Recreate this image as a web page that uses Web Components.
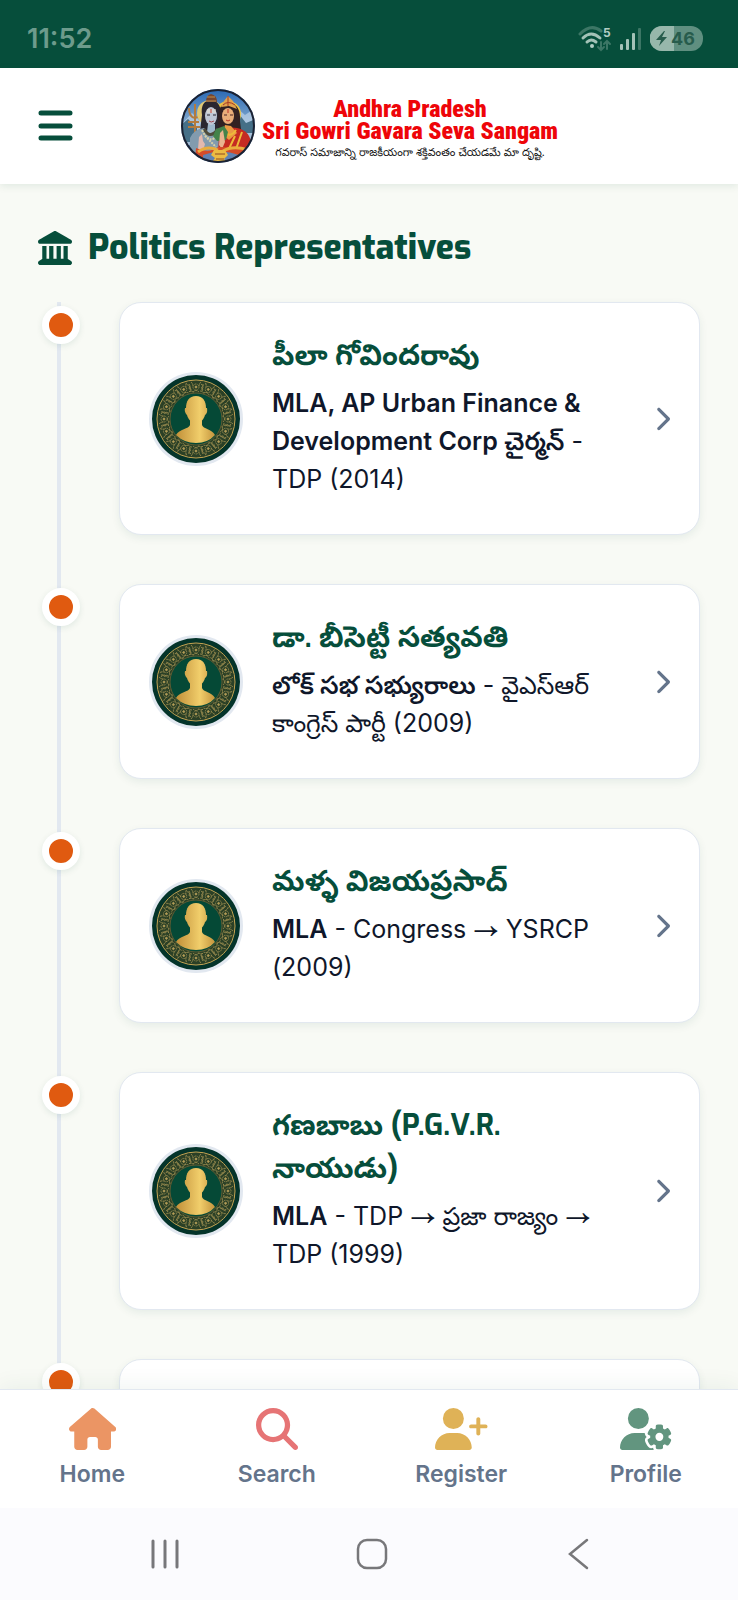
<!DOCTYPE html>
<html lang="te">
<head>
<meta charset="utf-8">
<meta name="viewport" content="width=device-width, initial-scale=1">
<title>Politics Representatives</title>
<style>
    :root {
        --green: #064e3b;
        --ink: #0f172a;
        --muted: #64748b;
        --line: #e2e8f0;
        --page: #f8faf5;
        --body_font: Inter, "Noto Sans Telugu", "Noto Sans", sans-serif;
        --title_font: Exo, "Noto Sans Telugu", "Noto Sans", sans-serif;
    }

    body {
        margin: 0px;
        background: var(--page);
        color: var(--ink);
        font-family: var(--body_font);
    }

    .arrow {
        font-family: "Noto Sans Math", "DejaVu Sans", sans-serif;
        line-height: 1;
    }
</style>
</head>
<body>

<app-shell>
    <status-bar slot="top"></status-bar>
    <app-header slot="top"></app-header>

    <section-title>Politics Representatives</section-title>
    <time-line>
        <rep-card>
            <span slot="name">పీలా గోవిందరావు</span>
            <b>MLA, AP Urban Finance &amp; Development Corp చైర్మన్</b> - TDP (2014)
        </rep-card>
        <rep-card>
            <span slot="name">డా. బీసెట్టీ సత్యవతి</span>
            <b>లోక్ సభ సభ్యురాలు</b> - వైఎస్ఆర్ కాంగ్రెస్ పార్టీ (2009)
        </rep-card>
        <rep-card>
            <span slot="name">మళ్ళ విజయప్రసాద్</span>
            <b>MLA</b> - Congress <span class="arrow">→</span> YSRCP (2009)
        </rep-card>
        <rep-card>
            <span slot="name">గణబాబు (P.G.V.R. నాయుడు)</span>
            <b>MLA</b> - TDP <span class="arrow">→</span> ప్రజా రాజ్యం <span class="arrow">→</span> TDP (1999)
        </rep-card>
        <rep-card></rep-card>
    </time-line>

    <tab-bar slot="bottom">
        <tab-item data-icon="home">Home</tab-item>
        <tab-item data-icon="search">Search</tab-item>
        <tab-item data-icon="register">Register</tab-item>
        <tab-item data-icon="profile">Profile</tab-item>
    </tab-bar>
    <system-bar slot="bottom"></system-bar>
</app-shell>

<script>
// Small base class: clones its own template into an open shadow root
const define = (name, html, setup) => {
    const template = document.createElement("template");
    template.innerHTML = html;
    customElements.define(name, class extends HTMLElement {
        constructor() {
            super();
            this.attachShadow({ mode: "open" });
            this.shadowRoot.append(template.content.cloneNode(true));
            setup?.(this, this.shadowRoot);
        }
    });
};


// Page frame: fixed bars around a scrolling middle
define("app-shell", /*html*/ `
<style>
    :host {
        display: flex;
        flex-direction: column;
        height: 100vh;
    }

    main {
        flex: 1;
        min-height: 0px;
        overflow-y: auto;
        scrollbar-width: none;
        padding: 40px 38px 0px;
    }

    header {
        position: relative;
        z-index: 1;
    }

    footer {
        position: relative;
        box-shadow: 0px -4px 20px rgba(6, 78, 59, 0.06);
    }
</style>
<header><slot name="top"></slot></header>
<main><slot></slot></main>
<footer><slot name="bottom"></slot></footer>
`);


define("status-bar", /*html*/ `
<style>
    :host {
        display: flex;
        justify-content: space-between;
        align-items: center;
        box-sizing: border-box;
        height: 68px;
        padding: 9px 35px 0px 27px;
        background: var(--green);
        color: #6d9b8c;
        font: 600 27px Inter, sans-serif;
    }

    div {
        display: flex;
        align-items: center;
        gap: 8px;
    }

    svg {
        display: block;
    }

    text {
        font-family: Inter, sans-serif;
    }
</style>
<time>11:52</time>
<div>
    <svg width="34" height="26" viewBox="0 0 34 26" fill="none" stroke-linecap="round" role="img" aria-label="Wi-Fi">
        <path d="M2 8Q13-3 23 5" stroke="#3c7665" stroke-width="3"></path>
        <path d="M5 12Q13 4 22 12" stroke="#a3c2b7" stroke-width="3"></path>
        <path d="M9 16Q13 12 18 16" stroke="#a3c2b7" stroke-width="3"></path>
        <circle cx="14" cy="20" r="2" fill="#b3cdc4"></circle>
        <path d="M23 16v8m-3-3l3 3 3-3M29 23v-8m-3 3l3-3 3 3" stroke="#3c7665" stroke-width="2"></path>
        <text x="25" y="11" font-size="12" font-weight="700" fill="#b3cdc4">5</text>
    </svg>
    <svg width="22" height="24" viewBox="0 0 22 24" role="img" aria-label="Signal">
        <rect x="0" y="17" width="3" height="6" rx="1" fill="#a3c2b7"></rect>
        <rect x="6" y="12" width="3" height="11" rx="1" fill="#a3c2b7"></rect>
        <rect x="12" y="6" width="3" height="17" rx="1" fill="#a3c2b7"></rect>
        <rect x="18" y="1" width="3" height="22" rx="1" fill="#3c7665"></rect>
    </svg>
    <svg width="53" height="25" viewBox="0 0 53 25" role="img" aria-label="Battery">
        <rect width="53" height="25" rx="12" fill="#5f8f80"></rect>
        <path d="M24 0H12a12 12 0 0 0 0 25H24z" fill="#97b7ab"></path>
        <path d="M14 5L6 14h5l-2 6 8-9h-5l3-6z" fill="#275c4c"></path>
        <text x="21" y="19" font-size="18" font-weight="700" fill="#275c4c">46</text>
    </svg>
</div>
`);


define("app-header", /*html*/ `
<style>
    :host {
        display: grid;
        grid-template-columns: 1fr auto 1fr;
        align-items: center;
        box-sizing: border-box;
        height: 116px;
        padding: 0px 38px;
        background: #fff;
        box-shadow: 0px 2px 8px rgba(6, 78, 59, 0.1);
    }

    button {
        justify-self: start;
        border: 0px;
        padding: 0px;
        background: none;
        color: var(--green);
        cursor: pointer;
    }

    svg {
        display: block;
    }

    a {
        display: flex;
        align-items: center;
        gap: 6px;
        color: #ee0509;
        text-align: center;
        text-decoration: none;
    }

    span {
        padding-top: 10px;
    }

    strong {
        display: block;
        font: 900 24px/22px "Roboto Condensed", Roboto, sans-serif;
        white-space: nowrap;
    }

    small {
        display: block;
        margin-top: 2px;
        color: #111;
        font: 400 11px/20px "Noto Sans Telugu", "Noto Sans", sans-serif;
        white-space: nowrap;
    }
</style>
<button type="button" aria-label="Menu">
    <svg width="35" height="32" viewBox="0 0 35 32" fill="none" stroke="currentColor" stroke-width="5" stroke-linecap="round">
        <path d="M3 3h29M3 16h29M3 28h29"></path>
    </svg>
</button>
<a href="#home">
    <svg width="76" height="76" viewBox="0 0 76 76" aria-hidden="true">
        <defs>
            <clipPath id="round"><circle cx="38" cy="38" r="36"></circle></clipPath>
            <linearGradient id="sky" x2="0" y2="1">
                <stop stop-color="#2868b4"></stop>
                <stop offset=".5" stop-color="#8aaed0"></stop>
                <stop offset="1" stop-color="#2c5787"></stop>
            </linearGradient>
        </defs>
        <circle cx="38" cy="38" r="37" fill="url(#sky)"></circle>
        <g clip-path="url(#round)">
            <path d="M0 38l12-13 7 7 7-9 8 12v22H0zM48 28l9-8 8 7 6-4 6 13v18H48z" fill="#cbdcec" opacity=".6"></path>
            <path d="M51 33l8-7 7 9 10-4v14H51zM0 38l8-7 9 9v14H0z" fill="#456f87"></path>
            <!-- trident and hood on the left -->
            <path d="M15 16v29M9 20q0 9 6 10 6-1 6-10M8 34h11M8 39h12" fill="none" stroke="#b47b3d" stroke-width="2"></path>
            <circle cx="30" cy="25" r="13" fill="#dfc875"></circle>
            <circle cx="48" cy="26" r="13" fill="#ecc342"></circle>
            <!-- left figure -->
            <path d="M22 27q-2-14 9-15 11 1 10 18l3 21H19z" fill="#29262f"></path>
            <path d="M26 14q0-7 5-8 6 1 6 8z" fill="#76452f"></path>
            <path d="M27 9h8M26 13h10" stroke="#bf914d" stroke-width="1"></path>
            <path d="M10 68V50q4-9 14-10l7 7 10-6 4 27z" fill="#829bae"></path>
            <path d="M28 36h7v8l-4 4-4-4z" fill="#9eb8cb"></path>
            <ellipse cx="31" cy="28" rx="6" ry="9" fill="#bec6d4"></ellipse>
            <path d="M27 22h9M27 24h9" stroke="#eee5d2"></path>
            <path d="M27 27h3M33 27h3" stroke="#27232b"></path>
            <path d="M29 33q2 2 5 0" fill="none" stroke="#a34750"></path>
            <path d="M31 21v4" stroke="#c64031"></path>
            <path d="M24 41q6 11 14 0" fill="none" stroke="#4f4c3b" stroke-width="3"></path>
            <path d="M22 42q8 17 17 3M25 48l11 11" fill="none" stroke="#d7d0a9" stroke-width="2" stroke-dasharray="2 1"></path>
            <path d="M18 61l1-12 3-3 1 7 2 3-2 7z" fill="#e3b9ae"></path>
            <!-- right figure -->
            <path d="M38 30q0-15 11-15 12 1 11 18l2 16H39z" fill="#312122"></path>
            <path d="M41 19l3-6 4-5 5 5 4 8-8-3z" fill="#e1a34e"></path>
            <path d="M48 8v10M43 17q5-5 12 0" fill="none" stroke="#a53922"></path>
            <ellipse cx="48" cy="28" rx="6" ry="8" fill="#e8ae7a"></ellipse>
            <path d="M44 27h3M50 27h3" stroke="#4a2525"></path>
            <path d="M46 32q2 2 4 0M48 21v4" fill="none" stroke="#bd3428"></path>
            <path d="M38 66l1-20 8-7 10 1q13 2 15 18v9z" fill="#c52b22"></path>
            <path d="M45 37l6 1 6 7-8 7-7-6z" fill="#ea9b43"></path>
            <path d="M43 43q7 8 13-1M55 48l-8 17M62 44l-7 20" fill="none" stroke="#eeb938" stroke-width="2"></path>
            <path d="M36 41l8-3 4 6-2 8-9 1-4-5z" fill="#43834a"></path>
            <path d="M39 57l1-12 3-3 2 12-3 7z" fill="#e9b48f"></path>
            <path d="M16 60q13 6 22-1 18 0 31 1l-5 15H15z" fill="#d44b29"></path>
            <path d="M18 64q9-7 20-2M43 63q10-6 25-1" fill="none" stroke="#e9ad3d" stroke-width="3"></path>
            <!-- gold pot at the feet -->
            <path d="M23 67q18-7 36 0v9H23z" fill="#6082b3"></path>
            <path d="M34 62h11l3 5-4 4 3 3H32l3-4-4-3z" fill="#edbb42"></path>
            <path d="M35 66h10M36 71h8" stroke="#8f4a25"></path>
        </g>
        <circle cx="38" cy="38" r="36" fill="none" stroke="#1b2233" stroke-width="2"></circle>
    </svg>
    <span>
        <strong>Andhra Pradesh</strong>
        <strong>Sri Gowri Gavara Seva Sangam</strong>
        <small>గవరాస్ సమాజాన్ని రాజకీయంగా శక్తివంతం చేయడమే మా దృష్టి.</small>
    </span>
</a>
`);


define("section-title", /*html*/ `
<style>
    :host {
        display: flex;
        align-items: center;
        gap: 16px;
        color: var(--green);
    }

    h1 {
        margin: 0px;
        font: 800 34px/48px var(--title_font);
    }
</style>
<svg width="34" height="34" viewBox="0 0 512 512" fill="currentColor" aria-hidden="true">
    <path d="M240.1 4.200c9.800-5.600 21.900-5.600 31.800 0l171.800 98.100L448 104l0 .9 47.900 27.400c12.600 7.200 18.800 22 15.100 36s-16.400 23.800-30.900 23.800H32c-14.500 0-27.200-9.800-30.900-23.800s2.500-28.800 15.100-36L64 104.900V104l4.400-1.600L240.100 4.200zM64 224h64V416h40V224h64V416h48V224h64V416h40V224h64V420.300c.6 .3 1.200 .7 1.800 1.100l48 32c11.700 7.800 17 22.400 12.900 35.900S494.100 512 480 512H32c-14.100 0-26.500-9.200-30.600-22.700s1.100-28.100 12.900-35.900l48-32c.6-.4 1.200-.7 1.800-1.100V224z"></path>
</svg>
<h1><slot></slot></h1>
`);


define("time-line", /*html*/ `
<style>
    :host {
        display: flex;
        flex-direction: column;
        gap: 49px;
        margin-top: 30px;
        /* vertical rail behind the dots */
        background: linear-gradient(var(--line), var(--line)) 19px 0px / 4px 100% no-repeat;
    }
</style>
<slot></slot>
`);


// Avatar with an ornamental gold ring, built from rotated rosettes
const rosettes = Array.from({ length: 16 }, (_, i) => `<use href="#petal" transform="rotate(${i * 22.5} 47 47)"></use>`).join("");

define("rep-avatar", /*html*/ `
<style>
    :host {
        display: block;
        flex: none;
    }

    svg {
        display: block;
    }
</style>
<svg width="94" height="94" viewBox="0 0 94 94" aria-hidden="true">
    <defs>
        <linearGradient id="gold" gradientUnits="userSpaceOnUse" x1="28" x2="66">
            <stop stop-color="#c3923b"></stop>
            <stop offset=".6" stop-color="#f1ce6b"></stop>
            <stop offset="1" stop-color="#c3943d"></stop>
        </linearGradient>
        <g id="petal" fill="none" stroke="#b59f5a" stroke-width=".7">
            <circle cx="47" cy="15" r="3" stroke-dasharray="1 .6"></circle>
            <circle cx="47" cy="15" r="1" fill="#b39b55"></circle>
            <path d="M42 10q2 2 2 4M52 10q-2 2-2 4M44 20q3-3 6 0M52 12q3 2 0 4 3 0 1 3M51 19q3 0 4 3M40 12q2 3 1 6" stroke-dasharray="2 .5"></path>
        </g>
    </defs>
    <circle cx="47" cy="47" r="47" fill="#e2e8f0"></circle>
    <circle cx="47" cy="47" r="44" fill="#04342a"></circle>
    <circle cx="47" cy="47" r="32" fill="none" stroke="#2b4026" stroke-width="13"></circle>
    ${rosettes}
    <circle cx="47" cy="47" r="39" fill="none" stroke="#c7a452" stroke-width="1"></circle>
    <circle cx="47" cy="47" r="26" fill="#054936" stroke="#5d5b33"></circle>
    <g fill="url(#gold)">
        <path d="M47 24c-7 0-10 5-10 12 0 9 4 15 10 15s10-6 10-15c0-7-3-12-10-12z"></path>
        <path d="M41 44v9c-1 4-11 4-14 10q8 8 20 8t19-8c-3-6-12-6-13-10v-9z"></path>
        <path d="M36 36h22q1 5-2 7H38q-3-3-2-7z"></path>
    </g>
</svg>
`);


define("rep-card", /*html*/ `
<style>
    :host {
        display: grid;
        grid-template-columns: 81px minmax(0px, 1fr);
    }

    i {
        box-sizing: border-box;
        width: 38px;
        height: 38px;
        margin: 4px;
        border: 7px solid #fff;
        border-radius: 50%;
        background: #e05a10;
        box-shadow: 0px 2px 6px rgba(6, 78, 59, 0.1);
    }

    a {
        display: flex;
        align-items: center;
        gap: 29px;
        padding: 31px 29px;
        border: 1px solid var(--line);
        border-radius: 22px;
        background: #fff;
        box-shadow: 0px 3px 8px rgba(6, 78, 59, 0.08);
        color: inherit;
        text-decoration: none;
    }

    div {
        flex: 1;
        min-width: 0px;
    }

    h2 {
        margin: 0px 0px 7px;
        color: var(--green);
        font: 700 29px/43px var(--title_font);
    }

    p {
        margin: 0px 0px 5px;
        font-size: 25px;
        line-height: 38px;
    }

    ::slotted(b) {
        font-weight: 600;
    }

    svg {
        flex: none;
        color: var(--muted);
    }
</style>
<i></i>
<a href="#representative">
    <rep-avatar></rep-avatar>
    <div>
        <h2><slot name="name"></slot></h2>
        <p><slot></slot></p>
    </div>
    <svg width="16" height="26" viewBox="0 0 320 512" fill="currentColor" aria-hidden="true">
        <path d="M310.600 233.400c12.500 12.500 12.500 32.800 0 45.300l-192 192c-12.500 12.500-32.800 12.500-45.300 0s-12.500-32.800 0-45.300L242.700 256 73.400 86.600c-12.500-12.500-12.500-32.800 0-45.300s32.800-12.500 45.300 0l192 192z"></path>
    </svg>
</a>
`);


define("tab-bar", /*html*/ `
<style>
    :host {
        display: block;
        border-top: 1px solid var(--line);
        background: #fff;
    }

    nav {
        display: grid;
        grid-template-columns: repeat(4, 1fr);
        height: 118px;
    }
</style>
<nav><slot></slot></nav>
`);


const tab_icons = {
    home: {
        width: 576,
        color: "#eb9564",
        path: "M575.8 255.5c0 18-15 32.1-32 32.1h-32l.7 160.2c0 2.7-.2 5.4-.5 8.1V472c0 22.1-17.9 40-40 40H456c-1.100 0-2.200 0-3.300-.1c-1.400 .1-2.800 .1-4.200 .1H416 392c-22.100 0-40-17.900-40-40V448 384c0-17.700-14.300-32-32-32H256c-17.700 0-32 14.300-32 32v64 24c0 22.100-17.900 40-40 40H160 128.100c-1.500 0-3-.1-4.500-.2c-1.200 .1-2.400 .2-3.600 .2H104c-22.100 0-40-17.900-40-40V360c0-.9 0-1.900 .1-2.800V287.600H32c-18 0-32-14-32-32.100c0-9 3-17 10-24L266.400 8c7-7 15-8 22-8s15 2 21 7L564.800 231.500c8 7 12 15 11 24z"
    },
    search: {
        width: 512,
        color: "#e67475",
        path: "M416 208c0 45.900-14.900 88.300-40 122.700L502.600 457.400c12.500 12.500 12.500 32.800 0 45.300s-32.800 12.500-45.300 0L330.700 376c-34.400 25.200-76.800 40-122.700 40C93.100 416 0 322.900 0 208S93.100 0 208 0S416 93.100 416 208zM208 352a144 144 0 1 0 0-288 144 144 0 1 0 0 288z"
    },
    register: {
        width: 640,
        color: "#dfb257",
        path: "M96 128a128 128 0 1 1 256 0A128 128 0 1 1 96 128zM0 482.300C0 383.800 79.800 304 178.300 304h91.400C368.200 304 448 383.800 448 482.300c0 16.400-13.300 29.700-29.700 29.700H29.700C13.300 512 0 498.700 0 482.300zM504 312V248H440c-13.300 0-24-10.700-24-24s10.700-24 24-24h64V136c0-13.300 10.700-24 24-24s24 10.700 24 24v64h64c13.300 0 24 10.700 24 24s-10.700 24-24 24H552v64c0 13.300-10.700 24-24 24s-24-10.700-24-24z"
    },
    profile: {
        width: 640,
        color: "#62957f",
        path: "M224 0a128 128 0 1 1 0 256A128 128 0 1 1 224 0zM178.300 304h91.400c11.800 0 23.400 1.200 34.500 3.300c-2.100 18.500 7.400 35.600 21.800 44.800c-16.600 10.600-26.700 31.600-20 53.300c4 12.900 9.400 25.500 16.400 37.600s15.200 23.100 24.400 33c15.700 16.900 39.600 18.400 57.200 8.700v.9c0 9.200 2.700 18.500 7.900 26.300H29.700C13.300 512 0 498.700 0 482.300C0 383.800 79.800 304 178.300 304zM436 218.200c0-7 4.500-13.300 11.300-14.800c10.500-2.400 21.500-3.700 32.700-3.700s22.200 1.300 32.700 3.700c6.800 1.500 11.300 7.800 11.300 14.800v30.600c7.900 3.400 15.400 7.700 22.300 12.800l24.900-14.300c6.100-3.500 13.700-2.700 18.500 2.400c7.600 8.100 14.300 17.200 20.100 27.200s10.300 20.400 13.500 31c2.100 6.700-1.100 13.700-7.200 17.200l-25 14.400c.4 4 .7 8.100 .7 12.300s-.2 8.200-.7 12.300l25 14.400c6.100 3.500 9.200 10.500 7.200 17.200c-3.300 10.600-7.800 21-13.500 31s-12.500 19.100-20.100 27.200c-4.800 5.100-12.500 5.900-18.500 2.400l-24.900-14.300c-6.900 5.100-14.300 9.400-22.300 12.800l0 30.600c0 7-4.500 13.300-11.300 14.800c-10.500 2.400-21.500 3.700-32.700 3.700s-22.200-1.300-32.700-3.700c-6.800-1.500-11.300-7.800-11.300-14.800V454.800c-8-3.400-15.600-7.700-22.500-12.900l-24.700 14.300c-6.100 3.500-13.700 2.700-18.500-2.400c-7.600-8.100-14.300-17.200-20.100-27.200s-10.300-20.400-13.500-31c-2.100-6.700 1.100-13.700 7.200-17.200l24.800-14.300c-.4-4.100-.7-8.200-.7-12.400s.2-8.300 .7-12.400L343.800 325c-6.100-3.500-9.200-10.500-7.200-17.200c3.300-10.600 7.700-21 13.500-31s12.500-19.100 20.100-27.200c4.800-5.100 12.400-5.900 18.500-2.400l24.800 14.300c6.900-5.100 14.500-9.400 22.500-12.900V218.200zm92.100 133.500a48.100 48.100 0 1 0 -96.100 0 48.100 48.100 0 1 0 96.100 0z"
    }
};

define("tab-item", /*html*/ `
<style>
    :host {
        display: block;
    }

    a {
        display: flex;
        flex-direction: column;
        align-items: center;
        gap: 10px;
        padding-top: 18px;
        color: var(--muted);
        font-size: 23px;
        font-weight: 600;
        line-height: 28px;
        text-decoration: none;
    }

    svg {
        height: 42px;
    }
</style>
<a>
    <svg fill="currentColor" aria-hidden="true"><path></path></svg>
    <slot></slot>
</a>
`, (host, root) => {
    const icon = tab_icons[host.dataset["icon"]];
    root.querySelector("a").href = "#" + host.dataset["icon"];
    root.querySelector("svg").setAttribute("viewBox", `0 0 ${icon.width} 512`);
    root.querySelector("svg").style.color = icon.color;
    root.querySelector("path").setAttribute("d", icon.path);
});


define("system-bar", /*html*/ `
<style>
    :host {
        display: flex;
        justify-content: space-around;
        align-items: center;
        height: 92px;
        padding: 0px 56px 0px 62px;
        background: #fbfbfe;
    }

    button {
        border: 0px;
        padding: 0px;
        background: none;
        color: #77777a;
    }

    svg {
        display: block;
        fill: none;
        stroke: currentColor;
        stroke-linecap: round;
    }
</style>
<button type="button" aria-label="Recent apps">
    <svg width="32" height="32" viewBox="0 0 32 32"><path d="M4 3v26M16 3v26M28 3v26" stroke-width="3"></path></svg>
</button>
<button type="button" aria-label="Home">
    <svg width="32" height="32" viewBox="0 0 32 32"><rect x="2" y="2" width="28" height="28" rx="9" stroke-width="2.5"></rect></svg>
</button>
<button type="button" aria-label="Back">
    <svg width="32" height="32" viewBox="0 0 32 32"><path d="M24 2L7 16l17 14" stroke-width="2.5"></path></svg>
</button>
`);
</script>
</body>
</html>
